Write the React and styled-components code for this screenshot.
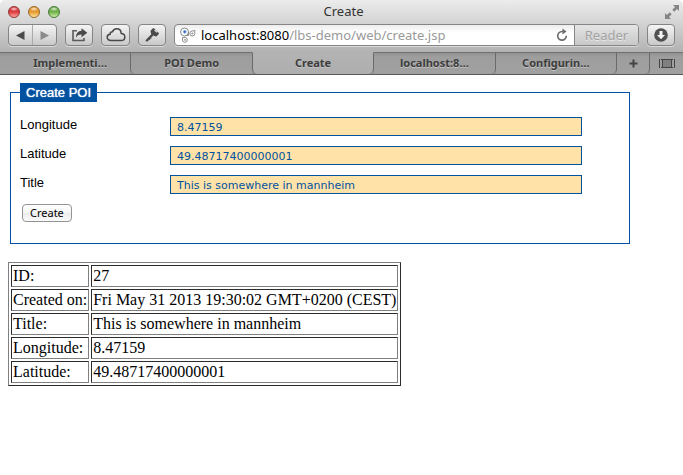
import React from "react";
import styled, { createGlobalStyle, css } from "styled-components";

const uiFont = `"Noto Sans", "Open Sans", sans-serif`;
const blue = "#0052a0";

const GlobalStyle = createGlobalStyle`
  * { box-sizing: border-box; }
  body { margin: 0; background: #fff; }
`;

const Window = styled.div`
  min-height: 100vh;
  overflow: hidden;
  background: #fff;
  border-radius: 5px;
`;

const Chrome = styled.header`
  font-family: ${uiFont};
  background: linear-gradient(#ececec, #d2d2d2 24px, #b2b2b2 52px, #adadad);
  border-bottom: 1px solid #5a5a5a;
`;

const TitleBar = styled.div`
  display: grid;
  grid-template-columns: 1fr auto 1fr;
  align-items: center;
  height: 24px;
  padding: 0 4px 0 8px;
`;

const Lights = styled.div`
  display: flex;
  gap: 8px;
`;

const lightColors = {
  red: { glow: "#ffa79c", body: "#dc3d3f", rim: "#8f3434" },
  amber: { glow: "#ffe49a", body: "#e59a32", rim: "#94662a" },
  green: { glow: "#cdf0a4", body: "#6fb04b", rim: "#46773a" },
};

const Light = styled.button`
  width: 12px;
  height: 12px;
  padding: 0;
  border: 1px solid ${(p) => lightColors[p.$tone].rim};
  border-radius: 50%;
  background:
    radial-gradient(ellipse 4px 2px at 50% 2px, #fffc, #fff0),
    linear-gradient(
      ${(p) => lightColors[p.$tone].body} 50%,
      ${(p) => lightColors[p.$tone].glow}
    );
`;

const WindowTitle = styled.div`
  font-size: 13px;
  line-height: 22px;
  color: #333;
  padding-bottom: 2px;
`;

const ExpandButton = styled.button`
  justify-self: end;
  display: flex;
  padding: 0;
  border: 0;
  background: none;
`;

const Toolbar = styled.div`
  display: flex;
  gap: 8px;
  height: 28px;
  padding: 0 8px;
`;

const raised = css`
  border: 1px solid #858585;
  border-radius: 4px;
  background: linear-gradient(#f4f4f4, #c9c9c9);
  box-shadow: 0 1px 0 #dadada;
`;

const ToolButton = styled.button`
  ${raised}
  display: flex;
  align-items: center;
  justify-content: center;
  width: ${(p) => (p.$wide ? 29 : 28)}px;
  height: 22px;
  padding: 0;
`;

const ButtonPair = styled.div`
  ${raised}
  display: flex;
  width: 49px;
  height: 22px;
`;

const PairButton = styled.button`
  display: flex;
  flex: 1;
  align-items: center;
  justify-content: center;
  padding: 0;
  border: 0;
  background: none;

  & + & {
    border-left: 1px solid #aaa;
  }
`;

const AddressBar = styled.div`
  display: flex;
  flex: 1;
  align-items: center;
  height: 22px;
  border: 1px solid #858585;
  border-radius: 4px;
  background: linear-gradient(#ededed, #fff 8px);
  box-shadow: 0 1px 0 #dadada;
  overflow: hidden;
`;

const SiteIcon = styled.span`
  display: flex;
  margin: 0 5px;
`;

const Address = styled.div`
  flex: 1;
  font-size: 13px;
  line-height: 20px;
  color: #999;
  white-space: nowrap;
`;

const Host = styled.span`
  color: #000;
`;

const ReloadButton = styled.button`
  display: flex;
  padding: 0;
  margin-right: 6px;
  border: 0;
  background: none;
`;

const ReaderButton = styled.button`
  width: 64px;
  height: 20px;
  padding: 0;
  border: 0;
  border-left: 1px solid #858585;
  background: linear-gradient(#e4e4e4, #c8c8c8);
  color: #a2a2a2;
  font-family: ${uiFont};
  font-size: 13px;
  line-height: 20px;
  text-shadow: 0 1px 0 #e8e8e8;
`;

const TabStrip = styled.nav`
  display: flex;
  height: 22px;
  background: #999;
`;

const tabShape = {
  first: css`
    flex-basis: 10px;
    padding-left: 10px;
  `,
  left: css`
    border-left: 1px solid #6a6a6a;
    border-bottom-left-radius: 5px;
  `,
  active: css`
    border: 1px solid #6a6a6a;
    border-top-color: #b2b2b2;
    border-bottom-width: 0;
    border-radius: 0 0 5px 5px;
    background: linear-gradient(#b3b3b3, #aeaeae);
  `,
  right: css`
    border-right: 1px solid #6a6a6a;
    border-bottom-right-radius: 5px;
  `,
};

const Tab = styled.a`
  flex: 1 1 0;
  min-width: 0;
  height: 22px;
  border-top: 1px solid #707070;
  background: linear-gradient(#929292, #9e9e9e 4px, #a0a0a0);
  color: #3c3c3c;
  font-size: 11px;
  font-weight: 700;
  line-height: 20px;
  text-align: center;
  text-decoration: none;
  text-shadow: 0 1px 0 #c4c4c4;
  ${(p) => tabShape[p.$shape]}
`;

const StripButton = styled.button`
  display: flex;
  align-items: center;
  justify-content: center;
  width: 33px;
  height: 22px;
  padding: 0;
  border: 0 solid #6a6a6a;
  border-top: 1px solid #707070;
  background: linear-gradient(#929292, #9e9e9e 4px, #a0a0a0);
  ${(p) => p.$divided && tabShape.right}
`;

const Page = styled.main`
  padding: 8px;
`;

const Fieldset = styled.fieldset`
  max-width: 620px;
  margin: 0 2px 18px;
  padding: 5px 9px 21px;
  border: 1px solid ${blue};
  font-family: "Liberation Sans", Arial, sans-serif;
  font-size: 13px;
`;

const Legend = styled.legend`
  padding: 0 6px;
  background: ${blue};
  color: #fff;
  font-size: 13px;
  line-height: 19px;
  text-shadow: 0 0 1px #fff;
`;

const Field = styled.div`
  display: flex;
  align-items: flex-start;
  margin: 10px 0;
`;

const FieldLabel = styled.label`
  width: 150px;
  line-height: 15px;
`;

const FieldInput = styled.input`
  flex: 0 1 412px;
  min-width: 0;
  height: 19px;
  padding: 1px 6px 0;
  border: 1px solid ${blue};
  border-radius: 0;
  background: #ffe2a8;
  color: ${blue};
  font-family: "DejaVu Sans", sans-serif;
  font-size: 11px;
`;

const SubmitButton = styled.button`
  display: block;
  height: 18px;
  margin: 0 2px;
  padding: 0 7px;
  border: 1px solid #949494;
  border-radius: 4px;
  background: linear-gradient(#fff, #f4f4f4 50%, #ebebeb 51%, #fafafa);
  color: #000;
  font-family: ${uiFont};
  font-size: 11px;
  line-height: 16px;
`;

const Details = styled.table`
  border: 1px solid;
  border-color: #808080 #2c2c2c #2c2c2c #808080;
  border-spacing: 2px;
  font-family: "Liberation Serif", "Times New Roman", serif;
  font-size: 16px;
  line-height: 18px;
  color: #000;
`;

const cell = css`
  padding: 1px;
  border: 1px solid;
  border-color: #2c2c2c #808080 #808080 #2c2c2c;
  font-weight: 400;
  text-align: left;
  white-space: nowrap;
`;

const HeadCell = styled.th`
  ${cell}
`;

const DataCell = styled.td`
  ${cell}
`;

const Arrow = ({ back }) => (
  <svg width="9" height="9" viewBox="0 0 9 9" aria-hidden="true">
    {back ? <path d="M8.500 0v9L0 4.500z" fill="#4a4a4a" /> : <path d="M.5 0v9L9 4.500z" fill="#8a8a8a" />}
  </svg>
);

const ShareIcon = () => (
  <svg width="17" height="14" viewBox="0 0 17 14" fill="none" aria-hidden="true">
    <path d="M6 2.800H2v9.700h11V10" stroke="#5a5a5a" strokeWidth="1.600" />
    <path d="M10.500 .3L16.300 4.700l-5.800 4.500V6.500C8 6.300 6.200 7.300 5 9.500c0-4 2-6.500 5.500-6.700z" fill="#4a4a4a" />
  </svg>
);

const CloudIcon = () => (
  <svg width="20" height="16" viewBox="0 0 20 16" fill="none" aria-hidden="true">
    <path
      d="M5 13.500C2.700 13.500 1.200 12.200 1.200 10.300 1.200 8.600 2.500 7.400 4.100 7.300 4 5.600 5 4.700 6.500 4.800 7.200 2.800 8.700 1.800 10.600 1.800c2.700 0 4.500 1.800 4.600 4.600 2.200.1 3.600 1.500 3.600 3.500 0 2.200-1.500 3.600-3.800 3.600z"
      stroke="#484848"
      strokeWidth="1.500"
    />
  </svg>
);

const KeyIcon = () => (
  <svg width="16" height="16" viewBox="0 0 16 16" aria-hidden="true">
    <path
      fillRule="evenodd"
      d="M8.600 1.600Q9.400 .9 10.300 1.600L14.600 5.700Q15.300 6.500 14.600 7.300L12.900 9.100Q12.200 9.800 11.300 9.300L9.300 8.600 7.300 10.600 7.400 11.800 6.200 11.700 6 12.900 4.800 12.800 4.300 14.200 2 14.500 1.500 13.200 7.300 7.200 6.600 4.900Q6.300 4 7 3.300zM10.200 3.400L12.700 5.800 13.500 5 11 2.600z"
      fill="#4a4a4a"
    />
  </svg>
);

const ServiceIcon = () => (
  <svg width="16" height="16" viewBox="0 0 16 16" fill="none" stroke="#8a8a8a" aria-hidden="true">
    <path d="M8.500 5a4 4 0 1 1-4-4 4 4 0 0 1 4 4v3.500H5" fill="#fff" />
    <circle cx="4.700" cy="4.800" r="1.500" fill="#2563b8" stroke="#9cbce6" />
    <path d="M14.800 3.500v3A2.500 2.500 0 1 1 12.300 4z" />
    <circle cx="12.300" cy="6.500" r=".6" />
    <path d="M2.500 10.500H5a2.400 2.400 0 1 1-2.500 2.400z" />
    <circle cx="5" cy="12.900" r=".5" />
  </svg>
);

const ReloadIcon = () => (
  <svg width="12" height="14" viewBox="0 0 12 14" fill="none" aria-hidden="true">
    <path d="M7.500 3.500H6a4.300 4.300 0 1 0 4.300 4.300" stroke="#6c6c6c" strokeWidth="1.700" />
    <path d="M6.500 .5v6L10.500 3.500z" fill="#6c6c6c" />
  </svg>
);

const DownloadIcon = () => (
  <svg width="14" height="14" viewBox="0 0 14 14" aria-hidden="true">
    <circle cx="7" cy="7" r="6.800" fill="#505050" />
    <path d="M5.500 3h3v4h2.500L7 11.200 3 7h2.500z" fill="#f4f4f4" />
  </svg>
);

const ExpandIcon = () => (
  <svg width="14" height="14" viewBox="0 0 14 14" fill="#858585" aria-hidden="true">
    <path d="M8 0h6v6l-2-2-2.700 2.700-2-2L10 2z" />
    <path d="M0 8l2 2 2.700-2.700 2 2L4 12l2 2H0z" />
  </svg>
);

const PlusIcon = () => (
  <svg width="9" height="9" viewBox="0 0 9 9" aria-hidden="true">
    <path d="M4.500 .5v8M.5 4.500h8" stroke="#444" strokeWidth="2" />
  </svg>
);

const TabsIcon = () => (
  <svg width="16" height="9" viewBox="0 0 16 9" aria-hidden="true">
    <path d="M.5 0v9M15.500 0v9" stroke="#444" />
    <rect x="3.500" y=".5" width="9" height="8" fill="#808080" stroke="#444" />
    <path d="M2 .5h2M12 .5h2M2 8.500h2M12 8.500h2" stroke="#444" />
  </svg>
);

const tabs = [
  { label: "Implementi…", shape: "first" },
  { label: "POI Demo", shape: "left" },
  { label: "Create", shape: "active" },
  { label: "localhost:8…", shape: "right" },
  { label: "Configurin…", shape: "right" },
];

const fields = [
  { id: "longitude", label: "Longitude", value: "8.47159" },
  { id: "latitude", label: "Latitude", value: "49.48717400000001" },
  { id: "title", label: "Title", value: "This is somewhere in mannheim" },
];

const details = [
  ["ID:", "27"],
  ["Created on:", "Fri May 31 2013 19:30:02 GMT+0200 (CEST)"],
  ["Title:", "This is somewhere in mannheim"],
  ["Longitude:", "8.47159"],
  ["Latitude:", "49.48717400000001"],
];

export default function App() {
  return (
    <Window>
      <GlobalStyle />
      <Chrome>
        <TitleBar>
          <Lights>
            <Light $tone="red" aria-label="Close" />
            <Light $tone="amber" aria-label="Minimize" />
            <Light $tone="green" aria-label="Zoom" />
          </Lights>
          <WindowTitle>Create</WindowTitle>
          <ExpandButton aria-label="Full screen"><ExpandIcon /></ExpandButton>
        </TitleBar>
        <Toolbar>
          <ButtonPair>
            <PairButton aria-label="Back"><Arrow back /></PairButton>
            <PairButton aria-label="Forward"><Arrow /></PairButton>
          </ButtonPair>
          <ToolButton aria-label="Share"><ShareIcon /></ToolButton>
          <ToolButton $wide aria-label="iCloud tabs"><CloudIcon /></ToolButton>
          <ToolButton aria-label="Passwords"><KeyIcon /></ToolButton>
          <AddressBar>
            <SiteIcon><ServiceIcon /></SiteIcon>
            <Address><Host>localhost:8080</Host>/lbs-demo/web/create.jsp</Address>
            <ReloadButton aria-label="Reload"><ReloadIcon /></ReloadButton>
            <ReaderButton>Reader</ReaderButton>
          </AddressBar>
          <ToolButton aria-label="Downloads"><DownloadIcon /></ToolButton>
        </Toolbar>
        <TabStrip>
          {tabs.map((tab) => (
            <Tab key={tab.label} href="#" $shape={tab.shape}>{tab.label}</Tab>
          ))}
          <StripButton $divided aria-label="New tab"><PlusIcon /></StripButton>
          <StripButton aria-label="Show all tabs"><TabsIcon /></StripButton>
        </TabStrip>
      </Chrome>
      <Page>
        <form onSubmit={(e) => e.preventDefault()}>
          <Fieldset>
            <Legend>Create POI</Legend>
            {fields.map((field) => (
              <Field key={field.id}>
                <FieldLabel htmlFor={field.id}>{field.label}</FieldLabel>
                <FieldInput id={field.id} defaultValue={field.value} />
              </Field>
            ))}
            <SubmitButton>Create</SubmitButton>
          </Fieldset>
        </form>
        <Details>
          <tbody>
            {details.map(([name, value]) => (
              <tr key={name}>
                <HeadCell scope="row">{name}</HeadCell>
                <DataCell>{value}</DataCell>
              </tr>
            ))}
          </tbody>
        </Details>
      </Page>
    </Window>
  );
}
